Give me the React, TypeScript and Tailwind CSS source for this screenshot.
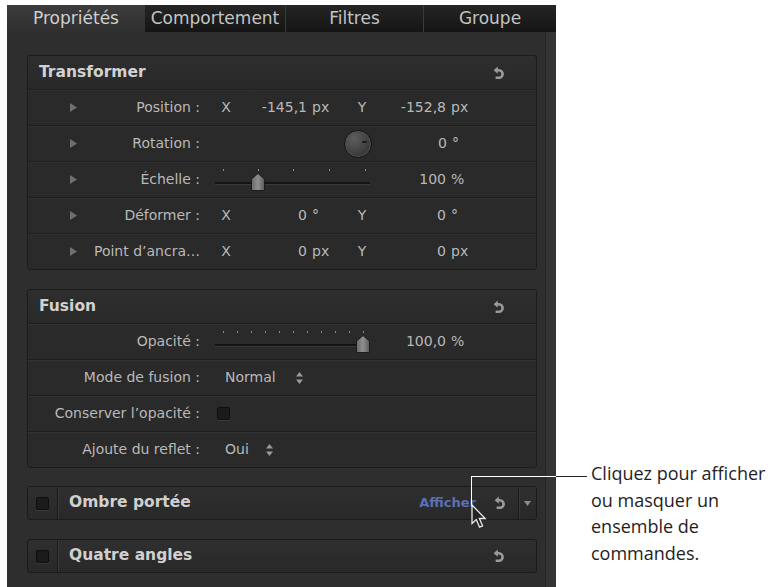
import React from 'react'

// petites icônes du panneau
const Reset = () => (
  <svg width="11" height="14" viewBox="0 0 11 14">
    <path d="M4.8 0.6 L0.6 4.2 L4.8 7.8 Z" fill="#9a9a9a" />
    <path d="M3.8 4.2 H6 A3.6 3.8 0 0 1 6 11.8 H2.6" stroke="#9a9a9a" strokeWidth="2.6" fill="none" />
  </svg>
)

const Tri = () => (
  <svg width="7" height="9" viewBox="0 0 7 9">
    <path d="M0 0 L7 4.5 L0 9 Z" fill="#6f6f6f" />
  </svg>
)

const UpDown = () => (
  <svg width="7" height="12" viewBox="0 0 7 12">
    <path d="M3.5 0 L7 4.5 H0 Z" fill="#9a9a9a" />
    <path d="M0 7.5 H7 L3.5 12 Z" fill="#9a9a9a" />
  </svg>
)

const Thumb = () => (
  <svg width="14" height="18" viewBox="0 0 14 18">
    <defs>
      <linearGradient id="th" x1="0" y1="0" x2="1" y2="0">
        <stop offset="0" stopColor="#6a6a6a" />
        <stop offset="0.5" stopColor="#8e8e8e" />
        <stop offset="1" stopColor="#5a5a5a" />
      </linearGradient>
    </defs>
    <path d="M0.5 6 L7 0.5 L13.5 6 V17.5 H0.5 Z" fill="url(#th)" stroke="#1c1c1c" strokeWidth="1" />
  </svg>
)

const Check = () => (
  <div className="w-[13px] h-[13px] rounded-[2px] bg-[#1b1b1b] border border-[#0e0e0e] shadow-[0_1px_0_#3a3a3a]" />
)

const Slider = ({ ticks, thumb }: { ticks: number[]; thumb: number }) => (
  <div className="relative ml-[15px] w-[155px] h-full shrink-0">
    {ticks.map((t) => (
      <div key={t} className="absolute top-[7px] w-px h-[2px] bg-[#8a8a8a]" style={{ left: t }} />
    ))}
    <div className="absolute left-0 right-0 top-[20px] h-[3px] bg-[#141414] border-b border-[#3a3a3a]" />
    <div className="absolute top-[11px]" style={{ left: thumb }}>
      <Thumb />
    </div>
  </div>
)

const rowCls = 'h-[36px] flex items-center border-t border-[#1e1e1e] shadow-[inset_0_1px_0_#323232] text-[14px] text-[#b9b9b9]'

function Label({ text, tri }: { text: string; tri?: boolean }) {
  return (
    <div className={`w-[172px] shrink-0 flex items-center ${tri ? 'pl-[42px]' : ''}`}>
      {tri && <Tri />}
      <span className="ml-auto whitespace-nowrap">{text}</span>
    </div>
  )
}

function XYRow({ label, x, xu, y, yu }: { label: string; x: string; xu: string; y: string; yu: string }) {
  return (
    <div className={rowCls}>
      <Label text={label} tri />
      <span className="ml-[13px] w-[26px] text-center">X</span>
      <span className="w-[68px] text-right">{x}</span>
      <span className="w-[23px] pl-[5px]">{xu}</span>
      <span className="ml-[19px] w-[26px] text-center">Y</span>
      <span className="w-[71px] text-right">{y}</span>
      <span className="pl-[5px]">{yu}</span>
    </div>
  )
}

const Header = ({ title }: { title: string }) => (
  <div className="h-[33px] flex items-center pl-[11px] pr-[32px] bg-[linear-gradient(#2e2e2e,#292929)] rounded-t-[3px]">
    <span className="text-[15.5px] font-bold text-[#d2d2d2]">{title}</span>
    <span className="ml-auto flex"><Reset /></span>
  </div>
)

const Collapsed = ({ title, extra }: { title: string; extra?: boolean }) => (
  <div className="h-[34px] flex items-center rounded-[3px] border border-[#1a1a1a] bg-[linear-gradient(#2f2f2f,#292929)]">
    <div className="w-[30px] h-full flex items-center justify-center border-r border-[#1a1a1a] shadow-[1px_0_0_#383838]">
      <Check />
    </div>
    <span className="pl-[11px] text-[15.5px] font-bold text-[#d0d0d0]">{title}</span>
    {extra ? (
      <>
        <span className="ml-auto text-[13px] font-bold text-[#5b70b2]">Afficher</span>
        <span className="ml-[18px] flex"><Reset /></span>
        <div className="ml-[13px] w-[18px] h-full flex items-center justify-center border-l border-[#1a1a1a] shadow-[inset_1px_0_0_#383838]">
          <svg width="7" height="5" viewBox="0 0 7 5"><path d="M0 0 H7 L3.5 5 Z" fill="#8c8c8c" /></svg>
        </div>
      </>
    ) : (
      <span className="ml-auto mr-[32px] flex"><Reset /></span>
    )}
  </div>
)

export default function App() {
  const tabs = [
    { t: 'Propriétés', w: 'w-[138px]', on: true },
    { t: 'Comportement', w: 'w-[140px]' },
    { t: 'Filtres', w: 'w-[138px]' },
    { t: 'Groupe', w: 'w-[133px]' },
  ]
  return (
    <div className="relative w-[771px] h-[587px] bg-white flex overflow-hidden font-['DejaVu_Sans',sans-serif]">
      {/* panneau inspecteur */}
      <div className="ml-[7px] mt-[5px] w-[549px] h-[582px] flex flex-col bg-[#2e2e2e] shrink-0">
        <div className="h-[27px] flex shrink-0">
          {tabs.map((tab, i) => (
            <div
              key={tab.t}
              className={`${tab.w} flex items-center justify-center pt-[1px] text-[17px] whitespace-nowrap ${
                tab.on
                  ? 'bg-[linear-gradient(#3c3c3c,#2f2f2f)] text-[#cfcfcf]'
                  : 'bg-[linear-gradient(#252525,#151515)] text-[#c4c4c4]'
              } ${i > 1 ? 'border-l border-[#3a3a3a]' : ''}`}
            >
              {tab.t}
            </div>
          ))}
        </div>

        <div className="flex flex-1">
          <div className="flex-1 pl-[20px] pr-[8px] pt-[23px] flex flex-col">
            {/* Transformer */}
            <div className="rounded-[3px] border border-[#1b1b1b] bg-[#2a2a2a]">
              <Header title="Transformer" />
              <XYRow label="Position :" x="-145,1" xu="px" y="-152,8" yu="px" />
              <div className={rowCls}>
                <Label text="Rotation :" tri />
                <div className="ml-[144px] w-[28px] h-[28px] rounded-full border border-[#151515] shadow-[inset_0_0_0_1px_#555] bg-[radial-gradient(circle_at_35%_30%,#5e5e5e,#3c3c3c_65%,#2e2e2e)] flex items-center justify-end pr-[4px] shrink-0">
                  <div className="w-[5px] h-[2px] bg-[#1e1e1e] -mt-[3px]" />
                </div>
                <span className="w-[75px] text-right">0</span>
                <span className="pl-[5px]">°</span>
              </div>
              <div className={rowCls}>
                <Label text="Échelle :" tri />
                <Slider ticks={[8, 43, 78, 114, 150]} thumb={36} />
                <span className="w-[76px] text-right">100</span>
                <span className="pl-[5px]">%</span>
              </div>
              <XYRow label="Déformer :" x="0" xu="°" y="0" yu="°" />
              <XYRow label="Point d’ancra…" x="0" xu="px" y="0" yu="px" />
            </div>

            {/* Fusion */}
            <div className="mt-[19px] rounded-[3px] border border-[#1b1b1b] bg-[#2a2a2a]">
              <Header title="Fusion" />
              <div className={rowCls}>
                <Label text="Opacité :" />
                <Slider ticks={[8, 22, 36, 50, 64, 78, 92, 106, 120, 134, 148]} thumb={141} />
                <span className="w-[76px] text-right">100,0</span>
                <span className="pl-[5px]">%</span>
              </div>
              <div className={rowCls}>
                <Label text="Mode de fusion :" />
                <span className="ml-[25px]">Normal</span>
                <span className="ml-[20px] flex"><UpDown /></span>
              </div>
              <div className={rowCls}>
                <Label text="Conserver l’opacité :" />
                <span className="ml-[17px]"><Check /></span>
              </div>
              <div className={rowCls}>
                <Label text="Ajoute du reflet :" />
                <span className="ml-[25px]">Oui</span>
                <span className="ml-[17px] flex"><UpDown /></span>
              </div>
            </div>

            <div className="mt-[18px]">
              <Collapsed title="Ombre portée" extra />
            </div>
            <div className="mt-[19px]">
              <Collapsed title="Quatre angles" />
            </div>
          </div>
          <div className="w-[11px] bg-[#343434] border-l border-[#262626]" />
        </div>
      </div>

      {/* légende */}
      <div className="ml-[35px] mt-[460px] text-[18px] leading-[26.7px] text-[#1e1e1e] font-['Open_Sans',sans-serif] whitespace-nowrap">
        Cliquez pour afficher
        <br />
        ou masquer un
        <br />
        ensemble de
        <br />
        commandes.
      </div>

      {/* trait de renvoi + curseur */}
      <div className="absolute left-[471px] top-[476px] w-[85px] h-px bg-white" />
      <div className="absolute left-[556px] top-[476px] w-[31px] h-px bg-[#222]" />
      <div className="absolute left-[471px] top-[476px] w-px h-[30px] bg-white" />
      <svg className="absolute left-[471px] top-[504px]" width="16" height="25" viewBox="0 0 16 25">
        <path d="M1 1 V19.5 L5.3 15.6 L8.6 23.2 L11.6 21.9 L8.4 14.5 H14.2 Z" fill="#222" stroke="#eaeaea" strokeWidth="1.3" />
      </svg>
    </div>
  )
}
